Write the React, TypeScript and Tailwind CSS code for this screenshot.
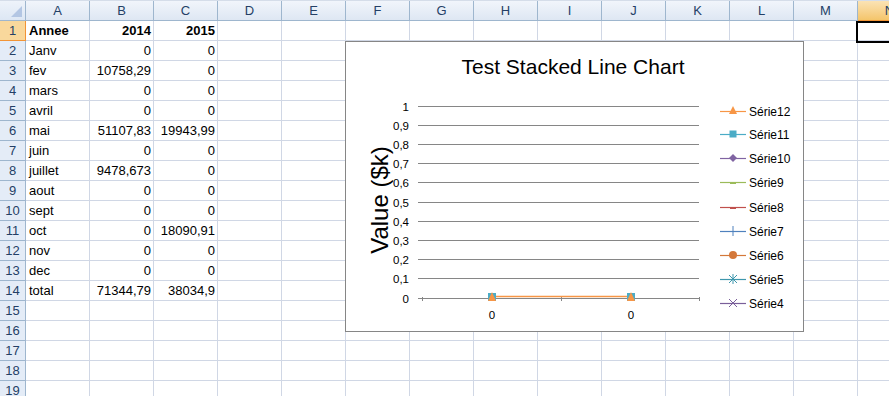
import React from "react";

const COLS = ["A", "B", "C", "D", "E", "F", "G", "H", "I", "J", "K", "L", "M", "N"];

type Row = { a?: string; b?: string; c?: string; bold?: boolean };
const ROWS: Row[] = [
  { a: "Annee", b: "2014", c: "2015", bold: true },
  { a: "Janv", b: "0", c: "0" },
  { a: "fev", b: "10758,29", c: "0" },
  { a: "mars", b: "0", c: "0" },
  { a: "avril", b: "0", c: "0" },
  { a: "mai", b: "51107,83", c: "19943,99" },
  { a: "juin", b: "0", c: "0" },
  { a: "juillet", b: "9478,673", c: "0" },
  { a: "aout", b: "0", c: "0" },
  { a: "sept", b: "0", c: "0" },
  { a: "oct", b: "0", c: "18090,91" },
  { a: "nov", b: "0", c: "0" },
  { a: "dec", b: "0", c: "0" },
  { a: "total", b: "71344,79", c: "38034,9" },
  {},
  {},
  {},
  {},
  {},
];

const font = { fontFamily: '"Liberation Sans", Arial, sans-serif' };

function Chart() {
  const yLabels = ["1", "0,9", "0,8", "0,7", "0,6", "0,5", "0,4", "0,3", "0,2", "0,1", "0"];
  const legend = [
    { name: "Série12", color: "#f79646", m: "tri" },
    { name: "Série11", color: "#4bacc6", m: "sq" },
    { name: "Série10", color: "#8064a2", m: "dia" },
    { name: "Série9", color: "#9bbb59", m: "dash" },
    { name: "Série8", color: "#c0504d", m: "dash2" },
    { name: "Série7", color: "#4f81bd", m: "plus" },
    { name: "Série6", color: "#d4783a", m: "circ" },
    { name: "Série5", color: "#3f97ad", m: "star" },
    { name: "Série4", color: "#7a5f9a", m: "x" },
  ];
  const legY = [69, 92, 116, 140, 165, 189, 213, 237, 261];
  const marker = (m: string, cx: number, cy: number, c: string) => {
    switch (m) {
      case "tri":
        return <polygon points={`${cx - 4},${cy + 3} ${cx + 4},${cy + 3} ${cx},${cy - 5}`} fill={c} />;
      case "sq":
        return <rect x={cx - 3.5} y={cy - 3.5} width={7} height={7} fill={c} />;
      case "dia":
        return <polygon points={`${cx},${cy - 4} ${cx + 4},${cy} ${cx},${cy + 4} ${cx - 4},${cy}`} fill={c} />;
      case "dash":
        return <rect x={cx - 3} y={cy} width={6} height={2} fill={c} />;
      case "dash2":
        return <rect x={cx - 3} y={cy} width={6} height={2} fill={c} />;
      case "plus":
        return <line x1={cx} y1={cy - 5} x2={cx} y2={cy + 5} stroke={c} strokeWidth={1} />;
      case "circ":
        return <circle cx={cx} cy={cy} r={4} fill={c} />;
      case "star":
        return (
          <g stroke={c} strokeWidth={1}>
            <line x1={cx} y1={cy - 5} x2={cx} y2={cy + 5} />
            <line x1={cx - 4} y1={cy - 4} x2={cx + 4} y2={cy + 4} />
            <line x1={cx + 4} y1={cy - 4} x2={cx - 4} y2={cy + 4} />
          </g>
        );
      case "x":
        return (
          <g stroke={c} strokeWidth={1}>
            <line x1={cx - 4} y1={cy - 4} x2={cx + 4} y2={cy + 4} />
            <line x1={cx + 4} y1={cy - 4} x2={cx - 4} y2={cy + 4} />
          </g>
        );
    }
    return null;
  };
  return (
    <div className="absolute left-[345px] top-[41px] h-[291px] w-[459px] border border-[#868686] bg-white">
      <svg width="457" height="289" viewBox="0 0 457 289" style={font}>
        <text x="227" y="32" fontSize="21" textAnchor="middle" fill="#000">
          Test Stacked Line Chart
        </text>
        <text
          x="0"
          y="0"
          fontSize="24"
          textAnchor="middle"
          fill="#000"
          transform="translate(42,158) rotate(-90)"
        >
          Value ($k)
        </text>
        {yLabels.map((l, i) => {
          const y = 63.5 + i * 19.2;
          const yy = Math.round(y) + 0.5;
          return (
            <g key={l}>
              <line x1="72" y1={yy} x2="353" y2={yy} stroke="#868686" strokeWidth="1" />
              <text x="63" y={yy + 4} fontSize="11.5" textAnchor="end" fill="#000">
                {l}
              </text>
            </g>
          );
        })}
        {[76.5, 215.5, 353.5].map((x) => (
          <line key={x} x1={x} y1="255" x2={x} y2="259" stroke="#868686" strokeWidth="1" />
        ))}
        <text x="146" y="277" fontSize="11.5" textAnchor="middle" fill="#000">0</text>
        <text x="285" y="277" fontSize="11.5" textAnchor="middle" fill="#000">0</text>
        <line x1="146" y1="254.5" x2="285" y2="254.5" stroke="#f79646" strokeWidth="1.5" />
        {[146, 285].map((x) => (
          <g key={x}>
            <rect x={x - 4} y={251} width={8} height={8} fill="#4bacc6" />
            <polygon points={`${x - 4},${259} ${x + 4},${259} ${x},${250}`} fill="#f79646" />
          </g>
        ))}
        {legend.map((s, i) => (
          <g key={s.name}>
            <line x1="374" y1={legY[i] + 0.5} x2="400" y2={legY[i] + 0.5} stroke={s.color} strokeWidth="1.2" />
            {marker(s.m, 387, legY[i], s.color)}
            <text x="403" y={legY[i] + 4.5} fontSize="12" fill="#000">
              {s.name}
            </text>
          </g>
        ))}
      </svg>
    </div>
  );
}

export default function App() {
  return (
    <div className="relative h-[396px] w-[889px] overflow-hidden bg-white" style={font}>
      {/* column header row */}
      <div className="flex h-[21px] border-t border-[#d5dde9]">
        <div className="relative w-[26px] shrink-0 border-r border-b border-[#9eb6ce] bg-gradient-to-b from-[#eef3fa] to-[#dde7f4]">
          <div
            className="absolute bottom-[3px] right-[3px] h-[11px] w-[11px] bg-[#b3c6e3]"
            style={{ clipPath: "polygon(100% 0, 100% 100%, 0 100%)" }}
          />
        </div>
        {COLS.map((c) =>
          c === "N" ? (
            <div
              key={c}
              className="flex w-[64px] shrink-0 items-center justify-center border-r border-b border-[#f29436] bg-gradient-to-b from-[#fbe3b4] to-[#f4c56a] text-[13px] text-[#243f66]"
            >
              {c}
            </div>
          ) : (
            <div
              key={c}
              className="flex w-[64px] shrink-0 items-center justify-center border-r border-b border-[#9eb6ce] bg-gradient-to-b from-[#f1f5fb] to-[#dee7f3] text-[13px] text-[#243f66]"
            >
              {c}
            </div>
          )
        )}
      </div>
      {ROWS.map((r, i) => (
        <div key={i} className="flex h-[20px]">
          <div
            className={
              i === 0
                ? "flex w-[26px] shrink-0 items-center justify-center border-r border-b border-[#f29436] bg-[#f9d89c] text-[13px] text-[#243f66]"
                : "flex w-[26px] shrink-0 items-center justify-center border-r border-b border-[#9eb6ce] bg-[#e4ecf7] text-[13px] text-[#243f66]"
            }
          >
            {i + 1}
          </div>
          <div
            className={
              "w-[64px] shrink-0 overflow-hidden whitespace-nowrap border-r border-b border-[#d0d7e5] pl-[3px] text-[13px] leading-[19px] text-black " +
              (r.bold ? "font-bold" : "")
            }
          >
            {r.a}
          </div>
          <div
            className={
              "w-[64px] shrink-0 overflow-hidden whitespace-nowrap border-r border-b border-[#d0d7e5] pr-[2px] text-right text-[13px] leading-[19px] text-black " +
              (r.bold ? "font-bold" : "")
            }
          >
            {r.b}
          </div>
          <div
            className={
              "w-[64px] shrink-0 overflow-hidden whitespace-nowrap border-r border-b border-[#d0d7e5] pr-[2px] text-right text-[13px] leading-[19px] text-black " +
              (r.bold ? "font-bold" : "")
            }
          >
            {r.c}
          </div>
          {COLS.slice(3).map((c) => (
            <div key={c} className="w-[64px] shrink-0 border-r border-b border-[#d0d7e5]" />
          ))}
        </div>
      ))}
      <div className="absolute left-[856px] top-[21px] h-[22px] w-[40px] border-2 border-black" />
      <Chart />
    </div>
  );
}
